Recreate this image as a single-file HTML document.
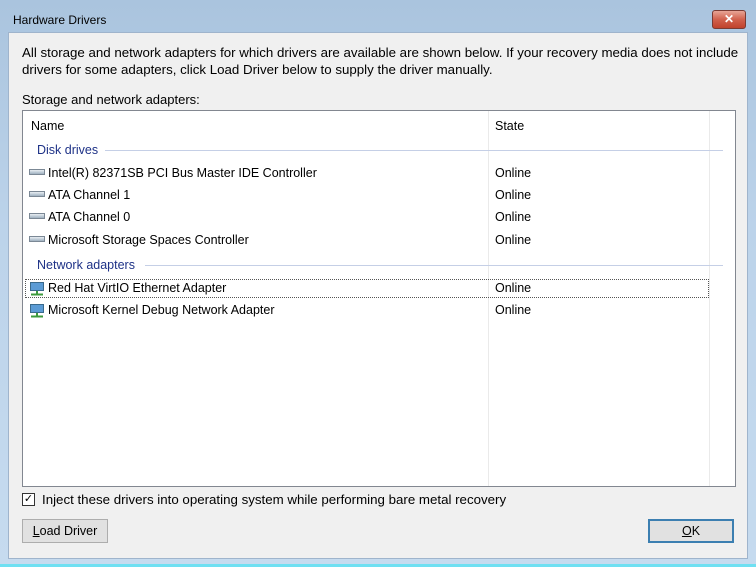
<!DOCTYPE html>
<html><head><style>
*{margin:0;padding:0;box-sizing:border-box}
body{width:756px;height:567px;overflow:hidden;background:linear-gradient(#aac4de,#bcd3ea 40%,#c6dbef);font-family:"Liberation Sans",sans-serif;font-size:12px;color:#000;position:relative}
.t{position:absolute;white-space:nowrap}
#client{position:absolute;left:8px;top:32px;width:740px;height:527px;background:#f0f0f0;border:1px solid #9fb4cc}
#close{position:absolute;left:712px;top:10px;width:34px;height:19px;border:1px solid #7a3b33;border-radius:3px;background:linear-gradient(#e7a596,#d1614d 50%,#c0422c);color:#fff;font-weight:bold;font-size:12px;text-align:center;line-height:17px}
#list{position:absolute;left:22px;top:110px;width:714px;height:377px;background:#fff;border:1px solid #828790}
#list .t{font-size:12.5px}
.vl{position:absolute;top:0;width:1px;height:375px;background:#eaeaea}
.grp{position:absolute;color:#1e3287}
.gl{position:absolute;height:1px;background:#c5cfe6}
.ico{position:absolute;width:16px;height:6px;border:1px solid #7b8895;background:linear-gradient(#e8eef3,#9fb0c0)}
.net{position:absolute;width:16px;height:15px}
.btn{position:absolute;height:24px;border:1px solid #adadad;background:#e1e1e1;text-align:center;line-height:22px;font-size:12.5px}
.w{font-size:13px}
</style></head><body>
<div class="t" style="left:13px;top:13px;font-size:12px">Hardware Drivers</div>
<div id="close">✕</div>
<div id="client"></div>
<div class="t w" style="left:22px;top:44px;line-height:17px;font-size:13.3px">All storage and network adapters for which drivers are available are shown below. If your recovery media does not include<br>drivers for some adapters, click Load Driver below to supply the driver manually.</div>
<div class="t w" style="left:22px;top:92px">Storage and network adapters:</div>
<div id="list">
 <div class="vl" style="left:465px"></div>
 <div class="vl" style="left:686px"></div>
 <div class="t" style="left:8px;top:8px">Name</div>
 <div class="t" style="left:472px;top:8px">State</div>
 <div class="grp t" style="left:14px;top:32px">Disk drives</div>
 <div class="gl" style="left:82px;top:39px;width:618px"></div>
 <div class="ico" style="left:6px;top:58px"></div><div class="t" style="left:25px;top:55px">Intel(R) 82371SB PCI Bus Master IDE Controller</div><div class="t" style="left:472px;top:55px">Online</div>
 <div class="ico" style="left:6px;top:80px"></div><div class="t" style="left:25px;top:77px">ATA Channel 1</div><div class="t" style="left:472px;top:77px">Online</div>
 <div class="ico" style="left:6px;top:102px"></div><div class="t" style="left:25px;top:99px">ATA Channel 0</div><div class="t" style="left:472px;top:99px">Online</div>
 <div class="ico" style="left:6px;top:125px"></div><div class="t" style="left:25px;top:122px">Microsoft Storage Spaces Controller</div><div class="t" style="left:472px;top:122px">Online</div>
 <div class="grp t" style="left:14px;top:147px">Network adapters</div>
 <div class="gl" style="left:122px;top:154px;width:578px"></div>
 <div style="position:absolute;left:2px;top:168px;width:684px;height:19px;border:1px dotted #555"></div>
 <svg class="net" style="left:6px;top:170px" viewBox="0 0 16 15"><rect x="1.5" y="1.5" width="13" height="8" fill="#5b9bd5" stroke="#3a6a8c"/><path d="M8 10v3M2 13.5h12" stroke="#3c9a3c" stroke-width="2"/></svg>
 <div class="t" style="left:25px;top:170px">Red Hat VirtIO Ethernet Adapter</div><div class="t" style="left:472px;top:170px">Online</div>
 <svg class="net" style="left:6px;top:192px" viewBox="0 0 16 15"><rect x="1.5" y="1.5" width="13" height="8" fill="#5b9bd5" stroke="#3a6a8c"/><path d="M8 10v3M2 13.5h12" stroke="#3c9a3c" stroke-width="2"/></svg>
 <div class="t" style="left:25px;top:192px">Microsoft Kernel Debug Network Adapter</div><div class="t" style="left:472px;top:192px">Online</div>
</div>
<div style="position:absolute;left:22px;top:493px;width:13px;height:13px;border:1px solid #333;background:#fff;font-size:11px;line-height:11px;text-align:center">✓</div>
<div class="t" style="left:42px;top:492px;font-size:13.3px">Inject these drivers into operating system while performing bare metal recovery</div>
<div class="btn" style="left:22px;top:519px;width:86px"><u>L</u>oad Driver</div>
<div class="btn" style="left:648px;top:519px;width:86px;border:2px solid #3c7fb1;line-height:20px"><u>O</u>K</div>
<div style="position:absolute;left:0;top:564px;width:756px;height:3px;background:#6fe0f2"></div>
</body></html>
